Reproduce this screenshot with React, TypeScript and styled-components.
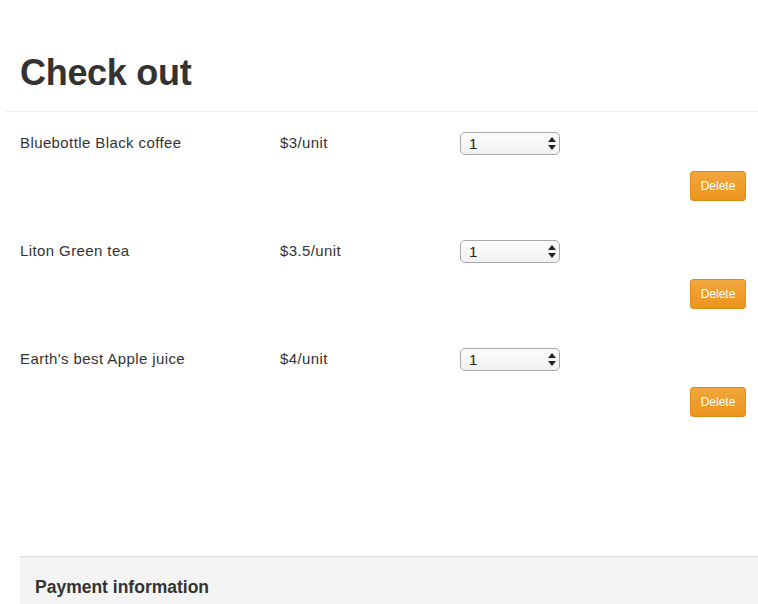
import React from "react";
import styled, { createGlobalStyle } from "styled-components";

const GlobalStyle = createGlobalStyle`
  html, body { margin: 0; padding: 0; background: #fff; }
  body {
    font-family: "Liberation Sans", Arial, Helvetica, sans-serif;
    font-size: 14px;
    color: #333;
  }
`;

const Page = styled.div`
  width: 758px;
  min-height: 604px;
  display: flex;
  flex-direction: column;
`;

const Header = styled.header`
  margin-left: 5px;
  padding: 53px 15px 18px;
  border-bottom: 1px solid #eee;
`;

const Title = styled.h1`
  margin: 0;
  font-size: 36px;
  line-height: 40px;
  font-weight: 700;
  color: #333;
  letter-spacing: -0.3px;
`;

const ItemList = styled.div`
  display: flex;
  flex-direction: column;
  gap: 39px;
  padding: 20px 12px 0 20px;
`;

const Item = styled.div`
  display: flex;
  flex-direction: column;
  gap: 16px;
`;

const ItemLine = styled.div`
  display: grid;
  grid-template-columns: 260px 180px 100px;
  align-items: center;
  height: 23px;
`;

const Cell = styled.span`
  font-size: 15px;
  letter-spacing: 0.4px;
  line-height: 20px;
  margin-top: -2px;
`;

const SelectWrap = styled.div`
  position: relative;
  width: 100px;
  height: 23px;
`;

const QtySelect = styled.select`
  appearance: none;
  -webkit-appearance: none;
  box-sizing: border-box;
  width: 100px;
  height: 23px;
  margin: 0;
  padding: 0 0 0 8px;
  border: 1px solid #a9a9a9;
  border-radius: 5px;
  background: linear-gradient(#fbfbfb, #f1f1f1);
  font-family: "Liberation Sans", Arial, sans-serif;
  font-size: 15px;
  color: #222;
  outline: none;
`;

const Arrows = styled.svg`
  position: absolute;
  right: 4px;
  top: 5px;
  width: 8px;
  height: 13px;
  pointer-events: none;
`;

const ButtonRow = styled.div`
  display: flex;
  justify-content: flex-end;
`;

const DeleteButton = styled.button`
  box-sizing: border-box;
  width: 56px;
  height: 30px;
  padding: 0;
  border: 1px solid #e28c17;
  border-radius: 3px;
  background: linear-gradient(#f1a63c, #eb951d);
  color: #fff;
  font-family: "Liberation Sans", Arial, sans-serif;
  font-size: 12px;
  cursor: pointer;
`;

const Payment = styled.section`
  margin: 139px 0 0 20px;
  flex: 1;
  background: #f4f4f4;
  border-top: 1px solid #ddd;
  padding: 20px 15px 0;
`;

const PaymentTitle = styled.h3`
  margin: 0;
  font-size: 17.5px;
  line-height: 20px;
  font-weight: 700;
  color: #333;
`;

const items = [
  { name: "Bluebottle Black coffee", price: "$3/unit" },
  { name: "Liton Green tea", price: "$3.5/unit" },
  { name: "Earth's best Apple juice", price: "$4/unit" },
];

export default function App() {
  return (
    <>
      <GlobalStyle />
      <Page>
        <Header>
          <Title>Check out</Title>
        </Header>
        <ItemList>
          {items.map((it) => (
            <Item key={it.name}>
              <ItemLine>
                <Cell>{it.name}</Cell>
                <Cell>{it.price}</Cell>
                <SelectWrap>
                  <QtySelect defaultValue="1">
                    <option value="1">1</option>
                    <option value="2">2</option>
                    <option value="3">3</option>
                  </QtySelect>
                  <Arrows viewBox="0 0 8 13">
                    <path d="M4 0 L8 5 L0 5 Z" fill="#222" />
                    <path d="M0 8 L8 8 L4 13 Z" fill="#222" />
                  </Arrows>
                </SelectWrap>
              </ItemLine>
              <ButtonRow>
                <DeleteButton>Delete</DeleteButton>
              </ButtonRow>
            </Item>
          ))}
        </ItemList>
        <Payment>
          <PaymentTitle>Payment information</PaymentTitle>
        </Payment>
      </Page>
    </>
  );
}
